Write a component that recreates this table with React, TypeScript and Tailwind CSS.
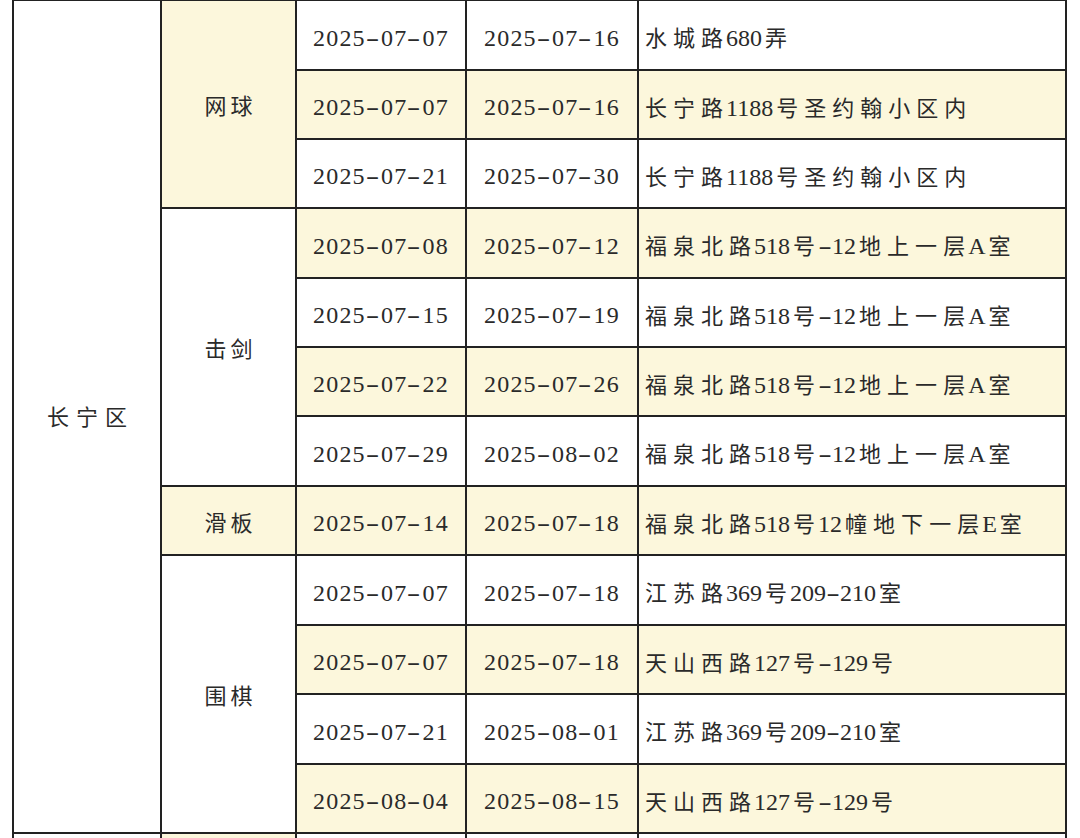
const HL = "bg-[#fcf7dc]";

type Row = {
  sport?: { name: string; span: number; hl: boolean };
  start: string;
  end: string;
  addr: string;
  hl: boolean;
  h: string;
};

const rows: Row[] = [
  { sport: { name: "网球", span: 3, hl: true }, start: "2025-07-07", end: "2025-07-16", addr: "水城路680弄", hl: false, h: "h-[70px]" },
  { start: "2025-07-07", end: "2025-07-16", addr: "长宁路1188号圣约翰小区内", hl: true, h: "h-[69px]" },
  { start: "2025-07-21", end: "2025-07-30", addr: "长宁路1188号圣约翰小区内", hl: false, h: "h-[69px]" },
  { sport: { name: "击剑", span: 4, hl: false }, start: "2025-07-08", end: "2025-07-12", addr: "福泉北路518号-12地上一层A室", hl: true, h: "h-[70px]" },
  { start: "2025-07-15", end: "2025-07-19", addr: "福泉北路518号-12地上一层A室", hl: false, h: "h-[69px]" },
  { start: "2025-07-22", end: "2025-07-26", addr: "福泉北路518号-12地上一层A室", hl: true, h: "h-[69px]" },
  { start: "2025-07-29", end: "2025-08-02", addr: "福泉北路518号-12地上一层A室", hl: false, h: "h-[70px]" },
  { sport: { name: "滑板", span: 1, hl: true }, start: "2025-07-14", end: "2025-07-18", addr: "福泉北路518号12幢地下一层E室", hl: true, h: "h-[69px]" },
  { sport: { name: "围棋", span: 4, hl: false }, start: "2025-07-07", end: "2025-07-18", addr: "江苏路369号209-210室", hl: false, h: "h-[70px]" },
  { start: "2025-07-07", end: "2025-07-18", addr: "天山西路127号-129号", hl: true, h: "h-[69px]" },
  { start: "2025-07-21", end: "2025-08-01", addr: "江苏路369号209-210室", hl: false, h: "h-[70px]" },
  { start: "2025-08-04", end: "2025-08-15", addr: "天山西路127号-129号", hl: true, h: "h-[69px]" },
];

// mixes serif digits with spaced-out CJK glyphs, like the original Word table
function Rich({ text, gap }: { text: string; gap: string }) {
  return (
    <>
      {Array.from(text).map((c, i) => {
        if (/[\u4e00-\u9fff]/.test(c)) {
          return (
            <span key={i} className={`inline-block font-['Noto_Sans_CJK_SC',sans-serif] text-[22px] ${gap}`}>
              {c}
            </span>
          );
        }
        if (c === "-") {
          return (
            <span key={i} className="mx-[3px] inline-block scale-x-[1.7] font-['Liberation_Serif',serif]">
              -
            </span>
          );
        }
        return (
          <span key={i} className="font-['Liberation_Serif',serif]">
            {c}
          </span>
        );
      })}
    </>
  );
}

const cell = "border-2 border-[#222] align-middle";

export default function App() {
  return (
    <div className="min-h-[838px] overflow-hidden bg-white pl-[12px]">
      <table className="-mt-px table-fixed border-collapse font-['Liberation_Serif','Noto_Sans_CJK_SC',serif] text-[24px] leading-none text-[#2a2a2a]">
        <colgroup>
          <col className="w-[148px]" />
          <col className="w-[135px]" />
          <col className="w-[170px]" />
          <col className="w-[172px]" />
          <col className="w-[428px]" />
        </colgroup>
        <tbody>
          {rows.map((r, i) => (
            <tr key={i} className={r.h}>
              {i === 0 && (
                <td rowSpan={12} className={`${cell} bg-white text-center`}>
                  <Rich text="长宁区" gap="mx-[3.5px]" />
                </td>
              )}
              {r.sport && (
                <td rowSpan={r.sport.span} className={`${cell} ${r.sport.hl ? HL : "bg-white"} pt-[3px] text-center`}>
                  <Rich text={r.sport.name} gap="mx-[2px]" />
                </td>
              )}
              <td className={`${cell} ${r.hl ? HL : "bg-white"} pt-[5px] text-center tracking-[1.2px]`}>
                <Rich text={r.start} gap="" />
              </td>
              <td className={`${cell} ${r.hl ? HL : "bg-white"} pt-[5px] text-center tracking-[1.2px]`}>
                <Rich text={r.end} gap="" />
              </td>
              <td className={`${cell} ${r.hl ? HL : "bg-white"} pl-[3px] pt-[5px] text-left`}>
                <Rich text={r.addr} gap="mx-[3px]" />
              </td>
            </tr>
          ))}
          <tr className="h-[69px]">
            <td className={`${cell} bg-white`} />
            <td className={`${cell} ${HL}`} />
            <td className={`${cell} bg-white`} />
            <td className={`${cell} bg-white`} />
            <td className={`${cell} bg-white`} />
          </tr>
        </tbody>
      </table>
    </div>
  );
}
